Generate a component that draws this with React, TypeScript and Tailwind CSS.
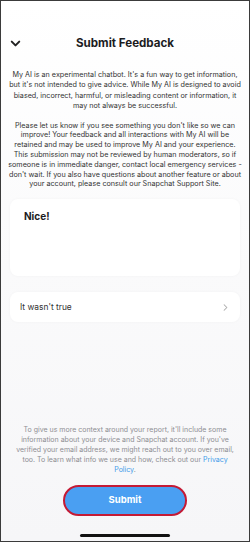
import { ChevronDown, ChevronRight } from 'lucide-react'

const font = { fontFamily: 'Inter, "Noto Sans", sans-serif' }

const intro = [
  "My AI is an experimental chatbot. It's a fun way to get information,",
  "but it's not intended to give advice. While My AI is designed to avoid",
  'biased, incorrect, harmful, or misleading content or information, it',
  'may not always be successful.',
]

const notice = [
  "Please let us know if you see something you don't like so we can",
  'improve! Your feedback and all interactions with My AI will be',
  'retained and may be used to improve My AI and your experience.',
  'This submission may not be reviewed by human moderators, so if',
  'someone is in immediate danger, contact local emergency services -',
  "don't wait. If you also have questions about another feature or about",
  'your account, please consult our Snapchat Support Site.',
]

const footer = [
  "To give us more context around your report, it'll include some",
  "information about your device and Snapchat account. If you've",
  'verified your email address, we might reach out to you over email,',
]

export default function App() {
  return (
    <div
      className="w-[250px] h-[542px] overflow-hidden border border-[#3b3b3b] bg-gradient-to-b from-white via-[#fafafb] to-[#f6f6f8] flex flex-col text-[#1c1c1e]"
      style={font}
    >
      <div className="relative mt-[34px] h-[18px] flex items-center justify-center">
        <ChevronDown size={15} strokeWidth={3.2} className="absolute left-[7px] top-[1px] text-[#222]" />
        <h1 className="text-[11.6px] font-bold">Submit Feedback</h1>
      </div>

      <div className="mt-[17px] text-center text-[7.2px] text-[#333] whitespace-nowrap">
        <div className="leading-[10.4px]">
          {intro.map((line) => (
            <p key={line}>{line}</p>
          ))}
        </div>
        <div className="mt-[9px] leading-[9.8px]">
          {notice.map((line) => (
            <p key={line}>{line}</p>
          ))}
        </div>
      </div>

      <div className="mx-[9px] mt-[10px] h-[77px] rounded-[8px] bg-white shadow-[0_0_3px_rgba(0,0,0,0.04)] px-[14px] pt-[10px]">
        <p className="text-[10px] font-bold">Nice!</p>
      </div>

      <div className="mx-[9px] mt-[16px] h-[30px] rounded-[8px] bg-white shadow-[0_0_3px_rgba(0,0,0,0.04)] pl-[10px] pr-[9px] flex items-center justify-between">
        <span className="text-[8.4px] text-[#333]">It wasn't true</span>
        <ChevronRight size={11} strokeWidth={2.2} className="text-[#aaa]" />
      </div>

      <div className="flex-1" />

      <div className="text-center text-[7px] leading-[10px] text-[#8e8e93] whitespace-nowrap">
        {footer.map((line) => (
          <p key={line}>{line}</p>
        ))}
        <p>
          too. To learn what info we use and how, check out our <span className="text-[#3d9be9]">Privacy</span>
        </p>
        <p className="text-[#3d9be9]">
          Policy<span className="text-[#8e8e93]">.</span>
        </p>
      </div>

      <div className="mt-[10px] flex justify-center">
        <button className="w-[124px] h-[31px] rounded-full bg-[#4a9ff2] border-2 border-[#c41a35] text-white text-[9.5px] font-bold">
          Submit
        </button>
      </div>

      <div className="mt-[18px] mb-[4px] flex justify-center">
        <div className="w-[90px] h-[3px] rounded-full bg-[#111]" />
      </div>
    </div>
  )
}
